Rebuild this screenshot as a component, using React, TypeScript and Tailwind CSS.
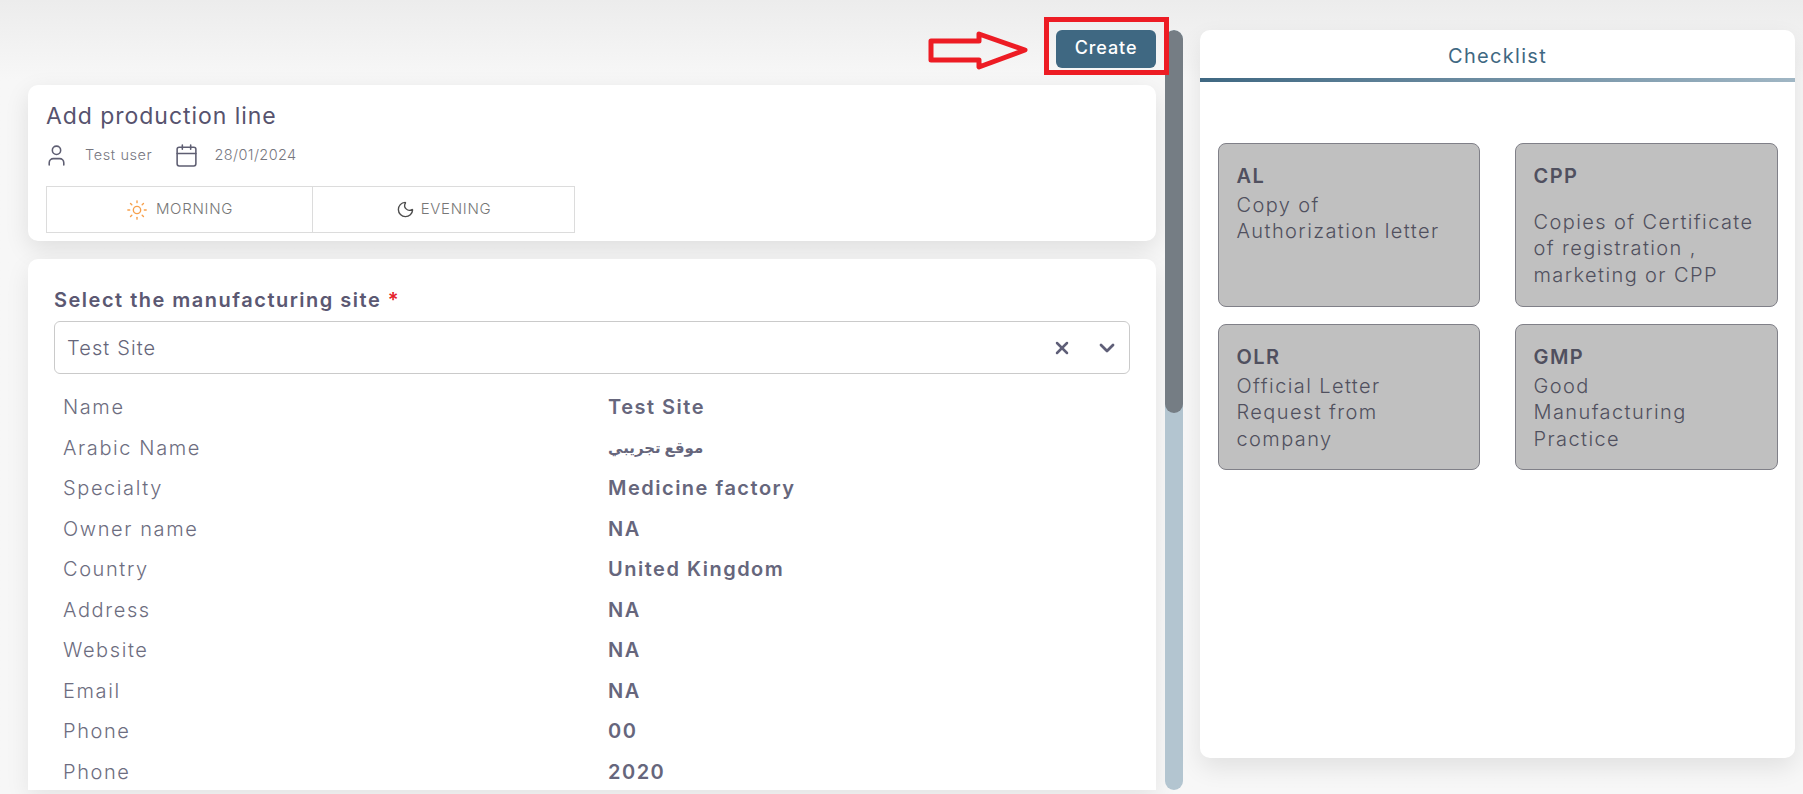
import React from 'react';
import { Calendar, ChevronDown, Moon, Sun, User, X } from 'lucide-react';

const fontStack = 'font-[Inter,"DejaVu_Sans",sans-serif]';

const siteDetails = [
  { label: 'Name', value: 'Test Site' },
  { label: 'Arabic Name', value: 'موقع تجريبي', arabic: true },
  { label: 'Specialty', value: 'Medicine factory' },
  { label: 'Owner name', value: 'NA' },
  { label: 'Country', value: 'United Kingdom' },
  { label: 'Address', value: 'NA' },
  { label: 'Website', value: 'NA' },
  { label: 'Email', value: 'NA' },
  { label: 'Phone', value: '00' },
  { label: 'Phone', value: '2020' },
];

const checklist = [
  { code: 'AL', lines: ['Copy of', 'Authorization letter'], gap: false },
  { code: 'CPP', lines: ['Copies of Certificate', 'of registration ,', 'marketing or CPP'], gap: true },
  { code: 'OLR', lines: ['Official Letter', 'Request from', 'company'], gap: false },
  { code: 'GMP', lines: ['Good', 'Manufacturing', 'Practice'], gap: false },
];

const App: React.FC = () => {
  return (
    <div className={`relative flex h-[794px] w-[1803px] overflow-hidden bg-gradient-to-b from-[#ececec] from-0% to-[#f7f7f7] to-[10%] pb-[4px] pl-[28px] pt-[30px] ${fontStack}`}>
      {/* Main column */}
      <div className="flex w-[1128px] flex-col">
        <div className="flex h-[38px] shrink-0 justify-end">
          <button className="h-[38px] w-[100px] rounded-[6px] bg-[#3f6882] pb-[3px] text-[18px] font-medium tracking-[0.9px] text-white">
            Create
          </button>
        </div>

        <div className="mt-[17px] h-[156px] shrink-0 rounded-[10px] bg-white px-[18px] pt-[16px] shadow-[0_8px_24px_rgba(0,0,0,0.1)]">
          <h1 className="text-[23px] leading-[30px] tracking-[0.95px] text-[#57536e]">Add production line</h1>
          <div className="mt-[12px] flex h-[24px] items-center text-[14.5px] font-light text-[#77777f]">
            <User className="-ml-[2px] h-[25px] w-[25px] shrink-0 text-[#5e5e72]" strokeWidth={1.5} />
            <span className="ml-[16px] tracking-[0.6px]">Test user</span>
            <Calendar className="ml-[22px] h-[25px] w-[25px] shrink-0 text-[#5e5e72]" strokeWidth={1.5} />
            <span className="ml-[15px] tracking-[0.4px]">28/01/2024</span>
          </div>
          <div className="mt-[19px] flex h-[47px] w-[529px] border border-[#dcdcdc] text-[15px] font-light tracking-[0.7px] text-[#777777]">
            <div className="flex w-[266px] items-center justify-center gap-[8px] border-r border-[#dcdcdc]">
              <Sun className="h-[22px] w-[22px] text-[#f7a04b]" strokeWidth={1.5} />
              MORNING
            </div>
            <div className="flex flex-1 items-center justify-center gap-[6px]">
              <Moon className="h-[19px] w-[19px] text-[#4c4c4c]" strokeWidth={1.7} />
              EVENING
            </div>
          </div>
        </div>

        <div className="mt-[18px] min-h-0 flex-1 overflow-hidden rounded-t-[10px] bg-white px-[26px] pt-[27px] shadow-[0_8px_24px_rgba(0,0,0,0.08)]">
          <label className="block text-[20px] font-semibold leading-[28px] tracking-[1.5px] text-[#5b5872]">
            Select the manufacturing site <span className="text-[#e5202a]">*</span>
          </label>
          <div className="mt-[7px] flex h-[53px] w-[1076px] items-center rounded-[6px] border border-[#cacaca] pl-[12px] pr-[10px]">
            <span className="flex-1 text-[20px] font-light tracking-[1.1px] text-[#66667a]">Test Site</span>
            <X className="h-[20px] w-[20px] text-[#5f5f78]" strokeWidth={3} />
            <ChevronDown className="ml-[23px] h-[24px] w-[24px] text-[#5f5f78]" strokeWidth={2.8} />
          </div>
          <div className="mt-[13px] flex flex-col pl-[9px]">
            {siteDetails.map((row, i) => (
              <div key={i} className="flex h-[40.5px] items-center text-[20px]">
                <span className="w-[545px] font-light tracking-[1.6px] text-[#6d6d80]">{row.label}</span>
                {row.arabic ? (
                  <span className="text-[15px] font-semibold text-[#66667c]">{row.value}</span>
                ) : (
                  <span className="font-semibold tracking-[1.5px] text-[#66667c]">{row.value}</span>
                )}
              </div>
            ))}
          </div>
        </div>
      </div>

      {/* Scroll track */}
      <div className="ml-[9px] h-[760px] w-[18px] shrink-0 overflow-hidden rounded-[9px] bg-[#b3c5d0]">
        <div className="h-[383px] rounded-[9px] bg-[#757d84]" />
      </div>

      {/* Checklist */}
      <div className="ml-[17px] h-[728px] w-[595px] shrink-0 rounded-[10px] bg-white shadow-[0_10px_24px_rgba(0,0,0,0.09)]">
        <div className="flex h-[48px] items-center justify-center pt-[4px] text-[20px] tracking-[1.3px] text-[#3f6882]">
          Checklist
        </div>
        <div className="h-[4px] bg-gradient-to-r from-[#3f6882] to-[#a0b6c4]" />
        <div className="grid grid-cols-[262px_263px] grid-rows-[164px_146px] gap-x-[35px] gap-y-[17px] pl-[18px] pt-[61px]">
          {checklist.map((item) => (
            <div
              key={item.code}
              className="rounded-[8px] border border-[#808088] bg-[#c0c0c0] pl-[17.5px] pt-[19px] text-[20px] font-light leading-[26.5px] tracking-[1.4px] text-[#50505e]"
            >
              <div className="mb-[2px] font-semibold text-[#50505f]">{item.code}</div>
              {item.gap && <div className="h-[17px]" />}
              {item.lines.map((line) => (
                <div key={line}>{line}</div>
              ))}
            </div>
          ))}
        </div>
      </div>

      {/* Annotation over the Create button */}
      <div className="absolute left-[1044px] top-[17px] h-[58px] w-[125px] border-[5px] border-[#ed1c24]" />
      <svg className="absolute left-[925px] top-[26px]" width="108" height="48" viewBox="0 0 108 48" fill="none">
        <path
          d="M6 15 H54 V8 L100 24 L54 41 V34 H6 Z"
          stroke="#ed1c24"
          strokeWidth="5"
          strokeLinejoin="round"
        />
      </svg>
    </div>
  );
};

export default App;
